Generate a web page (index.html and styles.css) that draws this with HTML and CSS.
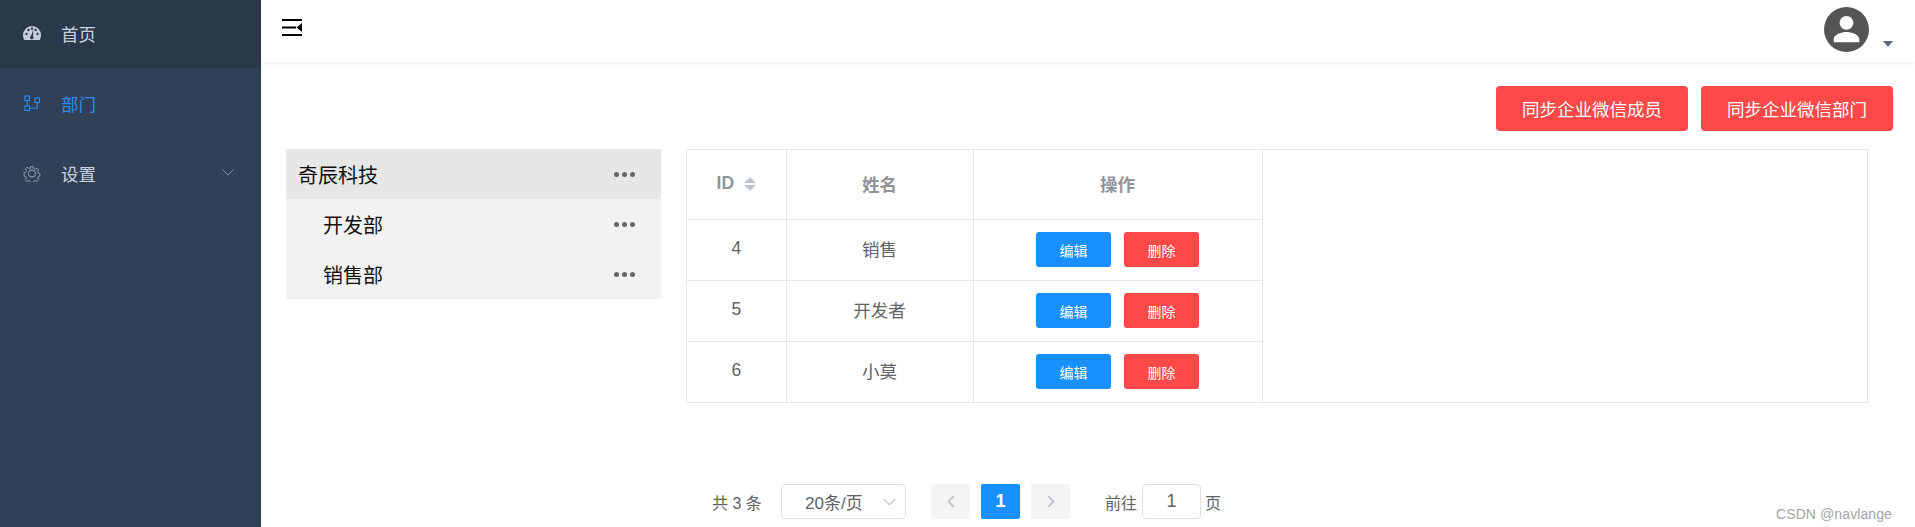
FILE: index.html
```html
<!DOCTYPE html>
<html lang="zh-CN">
<head>
<meta charset="utf-8">
<title>部门</title>
<link rel="stylesheet" href="styles.css">
</head>
<body>
<div class="app">
  <aside class="sidebar">
    <div class="menu-item home">
      <svg class="menu-icon" viewBox="0 0 18 14" width="18" height="14"><path fill="#c5cfdb" d="M9 0a9 9 0 0 0-9 9c0 2 .5 3.5 1.3 5h15.4c.8-1.500 1.300-3 1.300-5a9 9 0 0 0-9-9z"/><circle cx="3.500" cy="8" r="1.200" fill="#29394a"/><circle cx="5.500" cy="4" r="1.200" fill="#29394a"/><circle cx="9" cy="2.800" r="1.200" fill="#29394a"/><circle cx="14.500" cy="8" r="1.200" fill="#29394a"/><circle cx="12.500" cy="4" r="1.200" fill="#29394a"/><path fill="#29394a" d="M10.300 3.500 8 10a1.700 1.700 0 1 0 2 .3z"/></svg>
      <span>首页</span>
    </div>
    <div class="menu-item active">
      <svg class="menu-icon" viewBox="0 0 16 16" width="16" height="16" fill="none" stroke="#2d8cf0" stroke-width="1.100"><rect x="1" y="1" width="4.500" height="4.500"/><rect x="1" y="11" width="4.500" height="4.500"/><rect x="11" y="3" width="4.500" height="4.500"/><path d="M3.200 5.500V11M5.500 13.200h7.700V7.500"/></svg>
      <span>部门</span>
    </div>
    <div class="menu-item">
      <svg class="menu-icon" viewBox="0 0 18 18" width="17" height="17" fill="none" stroke="#a3aebb" stroke-width="1"><circle cx="9" cy="9" r="3.800"/><path d="M7.500 1h3l.5 2.200 1.800.8 2-1.200 2 2.100-1.200 2 .7 1.800 2 .6v2.600l-2 .6-.7 1.800 1.200 2-2 2.100-2-1.200-1.800.8-.5 2.200h-3l-.5-2.200-1.800-.8-2 1.200-2-2.100 1.200-2-.7-1.800-2-.6V8l2-.6.7-1.800-1.200-2 2-2.100 2 1.200L7 3.200z" transform="translate(.9 .9) scale(.9)"/></svg>
      <span>设置</span>
      <svg class="menu-arrow" viewBox="0 0 12 7" width="12" height="7" fill="none" stroke="#7f8b9a" stroke-width="1"><path d="M.5.5 6 6 11.500.5"/></svg>
    </div>
  </aside>
  <div class="main">
    <header class="topbar">
      <svg class="fold" viewBox="0 0 20 17" width="20" height="17"><path fill="#000" d="M0 0h20v2H0zM0 7.500h14v2H0zM0 15h20v2H0z"/><path fill="#000" d="M14.500 8.500l5.500-4.500v9z"/></svg>
      <div class="user">
        <div class="avatar">
          <svg viewBox="0 0 44 44" width="45" height="45"><circle cx="22" cy="22" r="22" fill="#555"/><circle cx="22" cy="15.500" r="6.800" fill="#fff"/><path fill="#fff" d="M9.500 34.500v-3c0-5 8-7 12.500-7s12.500 2 12.500 7v3z"/></svg>
        </div>
        <span class="caret"></span>
      </div>
    </header>
    <div class="content">
      <div class="actions">
        <button class="btn btn-sync">同步企业微信成员</button>
        <button class="btn btn-sync">同步企业微信部门</button>
      </div>
      <div class="panels">
        <ul class="tree">
          <li class="tree-row root"><span>奇辰科技</span><i class="dots"><b></b><b></b><b></b></i></li>
          <li class="tree-row child"><span>开发部</span><i class="dots"><b></b><b></b><b></b></i></li>
          <li class="tree-row child"><span>销售部</span><i class="dots"><b></b><b></b><b></b></i></li>
        </ul>
        <div class="table-wrap">
          <table class="table">
            <thead>
              <tr>
                <th class="col-id">ID <span class="sort"><i class="up"></i><i class="down"></i></span></th>
                <th class="col-name">姓名</th>
                <th class="col-op">操作</th>
              </tr>
            </thead>
            <tbody>
              <tr><td class="cell">4</td><td class="cell">销售</td><td class="ops"><button class="btn-sm edit">编辑</button><button class="btn-sm del">删除</button></td></tr>
              <tr><td class="cell">5</td><td class="cell">开发者</td><td class="ops"><button class="btn-sm edit">编辑</button><button class="btn-sm del">删除</button></td></tr>
              <tr><td class="cell">6</td><td class="cell">小莫</td><td class="ops"><button class="btn-sm edit">编辑</button><button class="btn-sm del">删除</button></td></tr>
            </tbody>
          </table>
        </div>
      </div>
      <nav class="pager">
        <span class="total">共 3 条</span>
        <div class="size">
          <span>20条/页</span>
          <svg viewBox="0 0 12 7" width="13" height="8" fill="none" stroke="#c0c4cc" stroke-width="1"><path d="M.5.5 6 6 11.500.5"/></svg>
        </div>
        <span class="page-btn"><svg viewBox="0 0 7 12" width="8" height="13" fill="none" stroke="#c0c4cc" stroke-width="1.800"><path d="M6 1 1.200 6 6 11"/></svg></span>
        <span class="page-btn current">1</span>
        <span class="page-btn"><svg viewBox="0 0 7 12" width="8" height="13" fill="none" stroke="#c0c4cc" stroke-width="1.800"><path d="M1 1l4.800 5L1 11"/></svg></span>
        <span class="goto">前往</span>
        <span class="goto-input">1</span>
        <span class="goto-end">页</span>
      </nav>
    </div>
  </div>
</div>
<div class="watermark">CSDN @navlange</div>
</body>
</html>
```
FILE: styles.css
```css
* { box-sizing: border-box; }
html, body { margin: 0; padding: 0; height: 527px; overflow: hidden; background: #fff; }
body { font-family: "Liberation Sans", "Noto Sans CJK SC", sans-serif; color: #606266; }
ul { list-style: none; margin: 0; padding: 0; }
button { font-family: inherit; border: 0; margin: 0; padding: 0; }

.app { display: flex; height: 527px; }

.sidebar { width: 261px; flex: none; background: #304057; }
.menu-item { height: 70px; display: flex; align-items: center; padding-left: 23px; font-size: 17.500px; color: #c9d3df; position: relative; }
.menu-item.home { height: 68px; background: #29394a; padding-bottom: 2px; }
.menu-item.active { color: #2d8cf0; }
.menu-icon { flex: none; margin-right: 20px; width: 18px; }
.menu-arrow { position: absolute; right: 27px; top: 31px; }

.main { flex: 1; min-width: 0; display: flex; flex-direction: column; }
.topbar { height: 62px; flex: none; display: flex; justify-content: space-between; padding: 19px 22px 0 21px; box-shadow: 0 1px 4px rgba(0, 21, 41, .08); position: relative; }
.fold { display: block; }
.user { display: flex; margin-top: -12px; }
.avatar { width: 45px; height: 45px; }
.avatar svg { display: block; }
.caret { width: 0; height: 0; border: 5px solid transparent; border-top: 6px solid #5a6a7c; border-bottom: 0; margin: 34px 0 0 14px; }

.content { flex: 1; min-height: 0; }
.actions { display: flex; justify-content: flex-end; gap: 13px; padding: 24px 22px 0 0; }
.btn { width: 192px; height: 45px; border-radius: 4px; font-size: 17.500px; }
.btn-sync { background: #ff4949; color: #fff; }

.panels { display: flex; margin-top: 18px; padding-left: 25px; }
.tree { width: 375px; flex: none; background: #f2f2f2; align-self: flex-start; font-size: 20px; color: #111; }
.tree-row { height: 50px; display: flex; align-items: center; justify-content: space-between; padding: 0 26px 0 12px; }
.tree-row.root { background: #e7e7e7; }
.tree-row.child { padding-left: 37px; }
.dots { display: flex; gap: 3px; }
.dots b { width: 5px; height: 5px; border-radius: 50%; background: #666; }

.table-wrap { width: 1182px; height: 254px; margin-left: 25px; border: 1px solid #e2e7ec; }
.table { border-collapse: collapse; table-layout: fixed; width: 575px; font-size: 17.500px; text-align: center; }
.table th, .table td { border: 1px solid #e2e7ec; padding: 0; }
.table tr:first-child th { border-top: 0; }
.table tr:last-child td { border-bottom: 0; }
.table tr th:first-child, .table tr td:first-child { border-left: 0; }
.col-id { width: 99px; }
.col-name { width: 187px; }
.col-op { width: 289px; }
.table th { height: 69px; color: #909399; font-weight: 700; padding-bottom: 2px; }
.table td { height: 61px; color: #606266; }
.table td.cell { padding-bottom: 2px; }
.sort { display: inline-flex; flex-direction: column; gap: 2px; vertical-align: middle; margin-left: 5px; }
.sort i { width: 0; height: 0; border-left: 6px solid transparent; border-right: 6px solid transparent; }
.sort .up { border-bottom: 6px solid #c0c4cc; }
.sort .down { border-top: 6px solid #c0c4cc; }
.ops { font-size: 0; }
.btn-sm { width: 75px; height: 35px; border-radius: 3px; color: #fff; font-size: 14px; }
.btn-sm.edit { background: #1890ff; margin-right: 13px; }
.btn-sm.del { background: #ff4949; }

.pager { display: flex; align-items: center; height: 35px; margin-top: 81px; padding-left: 451px; font-size: 16px; color: #606266; }
.total { width: 69px; }
.size { width: 125px; height: 35px; border: 1px solid #dcdfe6; border-radius: 4px; display: flex; align-items: center; justify-content: space-between; padding: 0 9px 0 23px; margin-right: 25px; font-size: 17px; }
.page-btn { width: 39px; height: 35px; background: #f4f4f5; border-radius: 2px; display: flex; align-items: center; justify-content: center; margin-right: 11px; font-weight: 700; }
.page-btn.current { background: #1890ff; color: #fff; font-size: 18px; }
.goto { margin-left: 24px; margin-right: 5px; }
.goto-input { width: 59px; height: 35px; border: 1px solid #dcdfe6; border-radius: 4px; display: flex; align-items: center; justify-content: center; font-size: 18px; }
.goto-end { margin-left: 4px; }

.watermark { position: absolute; right: 23px; bottom: 1px; height: 20px; line-height: 17px; font-size: 14px; letter-spacing: .1px; color: #a3a3a3; font-family: "Liberation Sans", sans-serif; }
```
